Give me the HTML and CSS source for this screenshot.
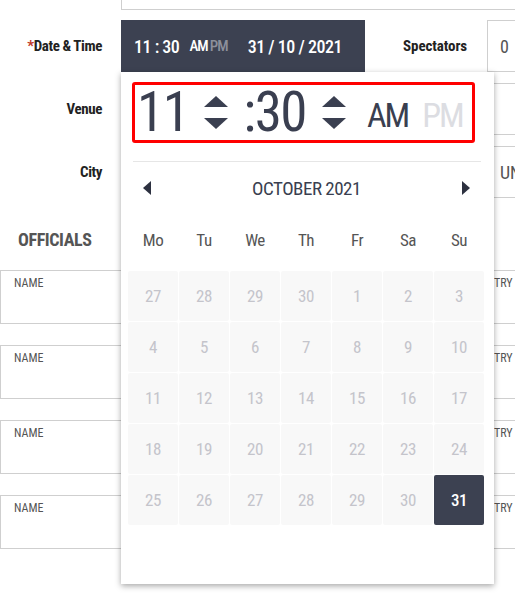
FILE: index.html
```html
<!DOCTYPE html>
<html lang="en">
<head>
    <meta charset="UTF-8">
    <meta name="viewport" content="width=device-width, initial-scale=1.0">
    <title>Match details</title>
    <link rel="stylesheet" href="styles.css">
</head>
<body>
    <div class="page">
        <div class="row row-cut">
            <div class="label"></div>
            <div class="field field-cut"></div>
        </div>

        <div class="row">
            <label class="label"><span class="req">*</span>Date &amp; Time</label>
            <div class="datetime">
                <span class="dt-time">11 : 30</span>
                <span class="dt-ampm">AM</span><span class="dt-ampm off">PM</span>
                <span class="dt-date">31 / 10 / 2021</span>
            </div>
            <label class="label label-inline">Spectators</label>
            <div class="field field-short">0</div>
        </div>

        <div class="row">
            <label class="label">Venue</label>
            <div class="field field-wide"></div>
        </div>

        <div class="row">
            <label class="label">City</label>
            <div class="field field-city"></div>
            <div class="field field-country">UNITED KINGDOM</div>
        </div>

        <h3 class="section-title">OFFICIALS</h3>

        <div class="officials">
            <div class="official"><div class="box box-name">NAME</div><div class="box box-country">COUNTRY</div></div>
            <div class="official"><div class="box box-name">NAME</div><div class="box box-country">COUNTRY</div></div>
            <div class="official"><div class="box box-name">NAME</div><div class="box box-country">COUNTRY</div></div>
            <div class="official"><div class="box box-name">NAME</div><div class="box box-country">COUNTRY</div></div>
        </div>

        <!-- date/time picker popup -->
        <div class="picker">
            <div class="time-box">
                <span class="t-big t-hours">11</span>
                <svg class="spin" width="26" height="34" viewBox="0 0 26 34"><polygon points="1,11 13,0 25,11"/><polygon points="1,22 25,22 13,33"/></svg>
                <span class="t-big t-mins">:30</span>
                <svg class="spin" width="26" height="34" viewBox="0 0 26 34"><polygon points="1,11 13,0 25,11"/><polygon points="1,22 25,22 13,33"/></svg>
                <span class="t-ampm">AM</span>
                <span class="t-ampm off">PM</span>
            </div>

            <div class="sep"></div>

            <div class="month-nav">
                <svg width="8" height="14" viewBox="0 0 8 14"><polygon points="8,0 8,14 0,7"/></svg>
                <span class="month">OCTOBER 2021</span>
                <svg width="8" height="14" viewBox="0 0 8 14"><polygon points="0,0 8,7 0,14"/></svg>
            </div>

            <div class="weekdays">
                <span>Mo</span><span>Tu</span><span>We</span><span>Th</span><span>Fr</span><span>Sa</span><span>Su</span>
            </div>

            <div class="days">
                <span>27</span><span>28</span><span>29</span><span>30</span><span>1</span><span>2</span><span>3</span>
                <span>4</span><span>5</span><span>6</span><span>7</span><span>8</span><span>9</span><span>10</span>
                <span>11</span><span>12</span><span>13</span><span>14</span><span>15</span><span>16</span><span>17</span>
                <span>18</span><span>19</span><span>20</span><span>21</span><span>22</span><span>23</span><span>24</span>
                <span>25</span><span>26</span><span>27</span><span>28</span><span>29</span><span>30</span><span class="selected">31</span>
            </div>
        </div>
    </div>
</body>
</html>
```

FILE: styles.css
```css
* {
    box-sizing: border-box;
    margin: 0;
    padding: 0;
}

body {
    font-family: "Roboto Condensed", Roboto, sans-serif;
    font-stretch: condensed;
    color: #3a3f50;
    background: #fff;
    overflow: hidden;
}

.page {
    position: relative;
    width: 560px;
    height: 595px;
}

/* Form rows */
.row {
    display: flex;
    align-items: center;
    height: 52px;
    margin-bottom: 11px;
}

.row-cut {
    height: 10px;
    margin-bottom: 10px;
    align-items: flex-end;
}

.label {
    flex: 0 0 121px;
    padding-right: 19px;
    text-align: right;
    font-weight: 700;
    font-size: 15px;
    letter-spacing: -0.4px;
    color: #222;
}

.req {
    color: #c0392b;
}

.label-inline {
    flex-basis: 122px;
    padding-right: 20px;
    letter-spacing: -0.1px;
}

.field {
    height: 52px;
    border: 1px solid #cfcfcf;
    padding: 0 12px;
    display: flex;
    align-items: center;
    font-size: 18px;
    color: #555;
}

.field-cut {
    flex: 0 0 420px;
    height: 10px;
    border-top: none;
}

.field-short {
    flex: 0 0 80px;
}

.field-wide {
    flex: 0 0 420px;
}

.field-city {
    flex: 0 0 358px;
    margin-right: 8px;
}

.field-country {
    flex: 0 0 200px;
    white-space: nowrap;
}

/* Date & time input */
.datetime {
    flex: 0 0 244px;
    height: 52px;
    background: #3c4151;
    color: #fff;
    display: flex;
    align-items: center;
    padding-left: 13px;
    font-weight: 500;
    white-space: nowrap;
}

.dt-time {
    font-size: 18px;
    letter-spacing: -0.5px;
    margin-right: 10px;
}

.dt-ampm {
    font-size: 15px;
    letter-spacing: -0.9px;
}

.dt-ampm.off {
    color: #8d909b;
    margin-left: 2px;
}

.dt-date {
    font-size: 18px;
    letter-spacing: -0.5px;
    margin-left: 20px;
}

/* Officials */
.section-title {
    font-size: 18px;
    font-weight: 700;
    color: #555;
    letter-spacing: -0.4px;
    padding-left: 18px;
    margin-top: 31px;
    height: 22px;
    line-height: 22px;
}

.officials {
    margin-top: 19px;
    display: flex;
    flex-direction: column;
    gap: 21px;
}

.official {
    display: flex;
    gap: 14px;
}

.box {
    height: 54px;
    border: 1px solid #cfcfcf;
    padding: 5px 13px;
    font-size: 12px;
    color: #555;
}

.box-name {
    flex: 0 0 438px;
}

.box-country {
    flex: 0 0 200px;
}

/* Picker popup */
.picker {
    position: absolute;
    left: 121px;
    top: 72px;
    width: 373px;
    height: 512px;
    background: #fff;
    box-shadow: 0 2px 6px rgba(0, 0, 0, 0.35);
}

.time-box {
    margin: 10px 0 0 11px;
    width: 343px;
    height: 61px;
    border: 3px solid #ff0000;
    border-radius: 3px;
    display: flex;
    align-items: center;
    padding-left: 2px;
}

.t-big {
    font-size: 55px;
    letter-spacing: -1.5px;
    line-height: 1;
}

.spin {
    fill: #3a3f50;
    margin: 0 14px 0 15px;
}

.t-ampm {
    font-size: 34px;
    letter-spacing: -2px;
    margin-left: 6px;
    margin-top: 4px;
}

.t-ampm.off {
    color: #dcdde2;
    margin-left: 14px;
}

.sep {
    margin: 18px 13px 0 12px;
    border-top: 1px solid #e6e6e6;
}

.month-nav {
    height: 52px;
    display: flex;
    align-items: center;
    justify-content: space-between;
    padding: 0 24px 0 22px;
    fill: #2d3140;
}

.month {
    font-size: 19px;
    letter-spacing: -0.5px;
}

.weekdays,
.days {
    display: grid;
    grid-template-columns: repeat(7, 50px);
    gap: 1px;
    margin-left: 7px;
}

.weekdays span {
    height: 52px;
    line-height: 52px;
    text-align: center;
    font-size: 17px;
    color: #555;
    letter-spacing: -0.5px;
}

.days {
    margin-top: 5px;
}

.days span {
    height: 50px;
    line-height: 50px;
    text-align: center;
    background: #f8f8f8;
    font-size: 17px;
    color: #c4c4cb;
    letter-spacing: -0.5px;
    border-radius: 2px;
}

.days .selected {
    background: #3c4151;
    color: #fff;
    font-weight: 500;
}
```
